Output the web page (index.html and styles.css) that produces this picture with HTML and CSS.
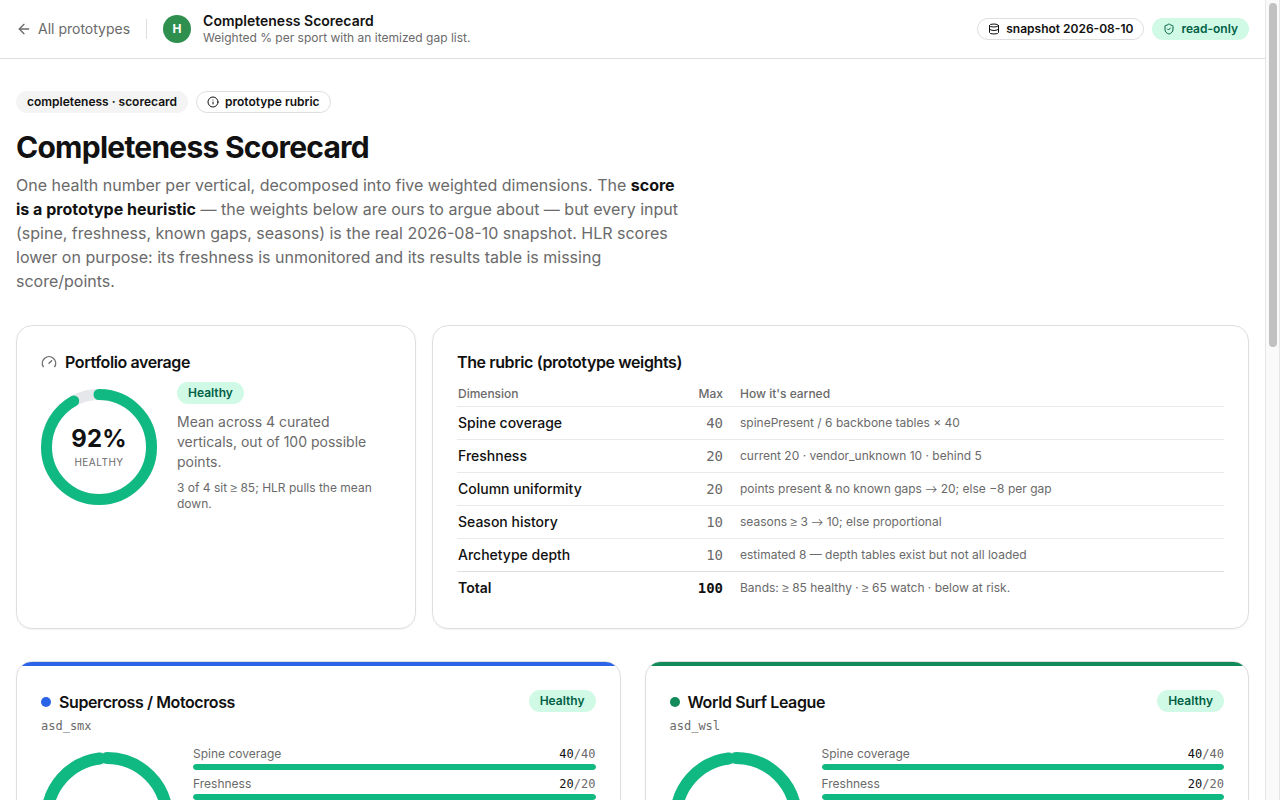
FILE: index.html
```html
<!DOCTYPE html>
<html lang="en">
<head>
    <meta charset="UTF-8">
    <meta name="viewport" content="width=device-width, initial-scale=1.0">
    <title>Completeness Scorecard</title>
    <link rel="stylesheet" href="styles.css">
</head>
<body>
    <div class="page">
        <header class="topbar">
            <a class="back" href="#">
                <svg class="icon" viewBox="0 0 24 24"><path d="m12 19-7-7 7-7"/><path d="M19 12H5"/></svg>
                All prototypes
            </a>
            <div class="divider"></div>
            <div class="logo">H</div>
            <div class="title">
                <div class="title-name">Completeness Scorecard</div>
                <div class="title-sub">Weighted % per sport with an itemized gap list.</div>
            </div>
            <div class="status">
                <span class="badge outline">
                    <svg class="icon small" viewBox="0 0 24 24"><ellipse cx="12" cy="5" rx="9" ry="3"/><path d="M3 5v14a9 3 0 0 0 18 0V5"/><path d="M3 12a9 3 0 0 0 18 0"/></svg>
                    snapshot 2026-08-10
                </span>
                <span class="badge green">
                    <svg class="icon small" viewBox="0 0 24 24"><path d="M20 13c0 5-3.5 7.5-7.66 8.95a1 1 0 0 1-.67-.01C7.5 20.5 4 18 4 13V6a1 1 0 0 1 1-1c2 0 4.5-1.2 6.24-2.72a1.17 1.17 0 0 1 1.52 0C14.51 3.81 17 5 19 5a1 1 0 0 1 1 1z"/><path d="m9 12 2 2 4-4"/></svg>
                    read-only
                </span>
            </div>
        </header>

        <main>
            <!-- intro -->
            <div class="tags">
                <span class="badge gray">completeness · scorecard</span>
                <span class="badge outline">
                    <svg class="icon small" viewBox="0 0 24 24"><circle cx="12" cy="12" r="10"/><path d="M12 16v-4"/><path d="M12 8h.01"/></svg>
                    prototype rubric
                </span>
            </div>
            <h1>Completeness Scorecard</h1>
            <p class="lead">One health number per vertical, decomposed into five weighted dimensions. The <strong>score is a prototype heuristic</strong> — the weights below are ours to argue about — but every input (spine, freshness, known gaps, seasons) is the real 2026-08-10 snapshot. HLR scores lower on purpose: its freshness is unmonitored and its results table is missing score/points.</p>

            <!-- average + rubric -->
            <div class="overview">
                <section class="card">
                    <h2>
                        <svg class="icon muted" viewBox="0 0 24 24"><path d="m12 14 4-4"/><path d="M3.34 19a10 10 0 1 1 17.32 0"/></svg>
                        Portfolio average
                    </h2>
                    <div class="average">
                        <div class="ring">
                            <svg width="116" height="116" viewBox="0 0 116 116">
                                <circle class="ring-track" cx="58" cy="58" r="52.5" stroke-width="11"/>
                                <circle class="ring-value" cx="58" cy="58" r="52.5" stroke-width="11" pathLength="100" stroke-dasharray="92 100" transform="rotate(-90 58 58)"/>
                            </svg>
                            <div class="ring-label">
                                <b>92%</b>
                                <span>HEALTHY</span>
                            </div>
                        </div>
                        <div class="average-text">
                            <span class="badge green">Healthy</span>
                            <p>Mean across 4 curated verticals, out of 100 possible points.</p>
                            <p class="note">3 of 4 sit <span class="sym">≥</span> 85; HLR pulls the mean down.</p>
                        </div>
                    </div>
                </section>

                <section class="card">
                    <h2>The rubric (prototype weights)</h2>
                    <table>
                        <thead>
                            <tr><th>Dimension</th><th class="max">Max</th><th class="how">How it's earned</th></tr>
                        </thead>
                        <tbody>
                            <tr><td>Spine coverage</td><td class="max">40</td><td class="how">spinePresent / 6 backbone tables × 40</td></tr>
                            <tr><td>Freshness</td><td class="max">20</td><td class="how">current 20 · vendor_unknown 10 · behind 5</td></tr>
                            <tr><td>Column uniformity</td><td class="max">20</td><td class="how">points present &amp; no known gaps <span class="arrow">→</span> 20; else −8 per gap</td></tr>
                            <tr><td>Season history</td><td class="max">10</td><td class="how">seasons <span class="sym">≥</span> 3 <span class="arrow">→</span> 10; else proportional</td></tr>
                            <tr><td>Archetype depth</td><td class="max">10</td><td class="how">estimated 8 — depth tables exist but not all loaded</td></tr>
                        </tbody>
                        <tfoot>
                            <tr><td>Total</td><td class="max">100</td><td class="how">Bands: <span class="sym">≥</span> 85 healthy · <span class="sym">≥</span> 65 watch · below at risk.</td></tr>
                        </tfoot>
                    </table>
                </section>
            </div>

            <!-- one card per sport -->
            <div class="sports">
                <section class="card sport smx">
                    <div class="sport-head">
                        <div>
                            <h2><span class="dot"></span>Supercross / Motocross</h2>
                            <div class="schema">asd_smx</div>
                        </div>
                        <span class="badge green">Healthy</span>
                    </div>
                    <div class="sport-body">
                        <svg width="132" height="132" viewBox="0 0 132 132">
                            <circle class="ring-track" cx="66" cy="66" r="60" stroke-width="12"/>
                            <circle class="ring-value" cx="66" cy="66" r="60" stroke-width="12" pathLength="100" stroke-dasharray="98 100" transform="rotate(-90 66 66)"/>
                        </svg>
                        <div class="scores">
                            <div class="score">
                                <div class="score-text"><span>Spine coverage</span><span class="points"><b>40</b>/40</span></div>
                                <div class="bar"><div class="fill" style="width: 100%"></div></div>
                            </div>
                            <div class="score">
                                <div class="score-text"><span>Freshness</span><span class="points"><b>20</b>/20</span></div>
                                <div class="bar"><div class="fill" style="width: 100%"></div></div>
                            </div>
                        </div>
                    </div>
                </section>

                <section class="card sport wsl">
                    <div class="sport-head">
                        <div>
                            <h2><span class="dot"></span>World Surf League</h2>
                            <div class="schema">asd_wsl</div>
                        </div>
                        <span class="badge green">Healthy</span>
                    </div>
                    <div class="sport-body">
                        <svg width="132" height="132" viewBox="0 0 132 132">
                            <circle class="ring-track" cx="66" cy="66" r="60" stroke-width="12"/>
                            <circle class="ring-value" cx="66" cy="66" r="60" stroke-width="12" pathLength="100" stroke-dasharray="98 100" transform="rotate(-90 66 66)"/>
                        </svg>
                        <div class="scores">
                            <div class="score">
                                <div class="score-text"><span>Spine coverage</span><span class="points"><b>40</b>/40</span></div>
                                <div class="bar"><div class="fill" style="width: 100%"></div></div>
                            </div>
                            <div class="score">
                                <div class="score-text"><span>Freshness</span><span class="points"><b>20</b>/20</span></div>
                                <div class="bar"><div class="fill" style="width: 100%"></div></div>
                            </div>
                        </div>
                    </div>
                </section>
            </div>
        </main>
    </div>
    <div class="scrollbar"><div class="thumb"></div></div>
</body>
</html>
```
FILE: styles.css
```css
*{
    box-sizing: border-box;
}
body{
    display: flex;
    height: 100vh;
    margin: 0;
    font-family: Inter, "Liberation Sans", sans-serif;
    font-size: 14px;
    line-height: 20px;
    color: #111;
    background-color: #fff;
}
h1, h2, p{
    margin: 0;
}
/* the page scrolls inside this box, its own bar is replaced by .scrollbar */
.page{
    flex: 1;
    min-width: 0;
    overflow-y: auto;
    scrollbar-width: none;
}
.scrollbar{
    width: 15px;
    padding: 3px 2px 3px 3px;
    background-color: #fafafa;
    border-left: 1px solid #e6e6e6;
    border-right: 1px solid #e6e6e6;
}
.thumb{
    width: 8px;
    height: 43.3%;
    border-radius: 4px;
    background-color: #c1c1c1;
}
.icon{
    width: 16px;
    height: 16px;
    fill: none;
    stroke: currentColor;
    stroke-width: 2;
    stroke-linecap: round;
    stroke-linejoin: round;
    flex-shrink: 0;
}
.small{
    width: 12px;
    height: 12px;
}
.muted{
    color: #6a6a6a;
}
.sym{
    font-family: "Liberation Sans", sans-serif;
}
.arrow{
    font-family: Lato, sans-serif;
}

/* top bar */
.topbar{
    display: flex;
    align-items: center;
    padding: 12px 16px;
    border-bottom: 1px solid #dedede;
}
.back{
    display: flex;
    align-items: center;
    gap: 6px;
    color: #6a6a6a;
    text-decoration: none;
}
.divider{
    width: 1px;
    height: 20px;
    margin: 0 16px;
    background-color: #dedede;
}
.logo{
    width: 28px;
    height: 28px;
    margin-right: 12px;
    border-radius: 50%;
    background-color: #2f8f4e;
    color: #fff;
    font-size: 12px;
    font-weight: 700;
    line-height: 28px;
    text-align: center;
}
.title-name{
    font-weight: 600;
    line-height: 18px;
}
.title-sub{
    font-size: 12px;
    line-height: 16px;
    color: #6a6a6a;
}
.status{
    display: flex;
    gap: 8px;
    margin-left: auto;
}
.badge{
    display: inline-flex;
    align-items: center;
    gap: 6px;
    padding: 2px 10px;
    border: 1px solid transparent;
    border-radius: 11px;
    font-size: 12px;
    font-weight: 600;
    line-height: 16px;
}
.outline{
    border-color: #dedede;
}
.gray{
    background-color: #f4f4f4;
}
.green{
    background-color: #d0fae5;
    color: #006045;
}

/* intro */
main{
    padding: 32px 16px;
}
.tags{
    display: flex;
    gap: 8px;
}
h1{
    margin-top: 16px;
    font-size: 30px;
    font-weight: 700;
    line-height: 36px;
    letter-spacing: -0.025em;
}
.lead{
    max-width: 672px;
    margin-top: 8px;
    font-size: 16px;
    line-height: 24px;
    color: #6a6a6a;
}
.lead strong{
    font-weight: 700;
    color: #111;
}

/* cards */
.card{
    padding: 24px;
    border: 1px solid #dedede;
    border-radius: 16px;
    box-shadow: 0 1px 2px rgba(0, 0, 0, 0.05);
}
h2{
    display: flex;
    align-items: center;
    gap: 8px;
    font-size: 16px;
    font-weight: 600;
    line-height: 24px;
    letter-spacing: -0.025em;
}
.overview{
    display: grid;
    grid-template-columns: 400px 1fr;
    gap: 16px;
    margin-top: 32px;
}
.average{
    display: flex;
    align-items: center;
    gap: 20px;
    margin-top: 8px;
}
.average-text p{
    margin-top: 8px;
    color: #6a6a6a;
}
.average-text .note{
    font-size: 12px;
    line-height: 16px;
}
.ring{
    position: relative;
    width: 116px;
    height: 116px;
    flex-shrink: 0;
}
.ring-label{
    position: absolute;
    inset: 0;
    display: flex;
    flex-direction: column;
    align-items: center;
    justify-content: center;
    padding-top: 2px;
}
.ring-label b{
    font-size: 24px;
    line-height: 24px;
    font-variant-numeric: tabular-nums;
}
.ring-label span{
    margin-top: 4px;
    font-size: 10px;
    line-height: 15px;
    letter-spacing: 0.05em;
    color: #6a6a6a;
}
.ring-track, .ring-value{
    fill: none;
    stroke: #e5e7eb;
}
.ring-value{
    stroke: #10b981;
    stroke-linecap: round;
}

/* rubric table */
table{
    width: 100%;
    margin-top: 8px;
    border-collapse: collapse;
}
th, td{
    padding: 6px 1px;
    text-align: left;
    font-weight: 500;
}
th{
    padding: 4px 1px;
    font-size: 12px;
    line-height: 16px;
    color: #6a6a6a;
}
tbody tr{
    border-top: 1px solid #e9e9e9;
}
tfoot tr{
    border-top: 1px solid #dedede;
}
.max{
    width: 48px;
    text-align: right;
}
td.max{
    font-family: "DejaVu Sans Mono", monospace;
    font-weight: 400;
    color: #6a6a6a;
}
.how{
    width: 500px;
    padding-left: 16px;
}
td.how{
    font-size: 12px;
    font-weight: 400;
    color: #6a6a6a;
}
tfoot td{
    font-weight: 600;
}
tfoot td.max{
    font-weight: 700;
    color: #111;
}

/* sports */
.sports{
    display: grid;
    grid-template-columns: 1fr 1fr;
    gap: 24px;
    margin-top: 32px;
}
.sport{
    padding-top: 0;
    overflow: hidden;
}
.sport::before{
    content: "";
    display: block;
    height: 4px;
    margin: 0 -24px 24px;
    background-color: var(--sport);
}
.smx{
    --sport: #2b63e8;
}
.wsl{
    --sport: #128a5a;
}
.sport-head{
    display: flex;
    align-items: flex-start;
    justify-content: space-between;
}
.dot{
    width: 10px;
    height: 10px;
    border-radius: 50%;
    background-color: var(--sport);
}
.schema{
    margin-top: 4px;
    font-family: "DejaVu Sans Mono", monospace;
    font-size: 12px;
    line-height: 16px;
    color: #6a6a6a;
}
.sport-body{
    display: flex;
    gap: 20px;
    margin-top: 12px;
}
.sport-body svg{
    margin-top: 6px;
    flex-shrink: 0;
}
.scores{
    flex: 1;
}
.score{
    margin-bottom: 6px;
}
.score-text{
    display: flex;
    justify-content: space-between;
    font-size: 12px;
    line-height: 16px;
    color: #6a6a6a;
}
.points{
    font-family: "DejaVu Sans Mono", monospace;
}
.points b{
    color: #111;
    font-weight: 500;
}
.bar{
    height: 6px;
    margin-top: 2px;
    border-radius: 3px;
    background-color: #e5e7eb;
    overflow: hidden;
}
.fill{
    height: 100%;
    border-radius: 3px;
    background-color: #10b981;
}
```
